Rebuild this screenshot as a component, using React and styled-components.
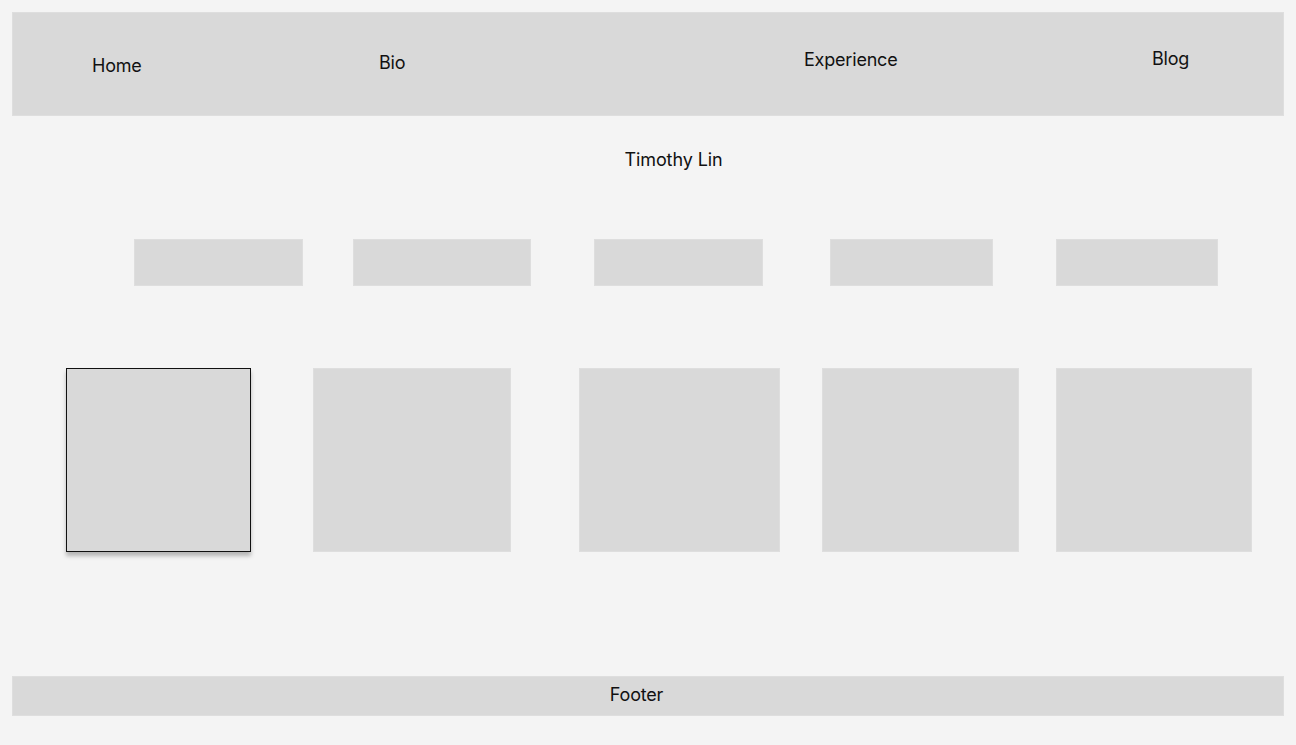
import styled, { createGlobalStyle } from "styled-components"

const GlobalStyle = createGlobalStyle`
  body {
    margin: 0;
    background: #f4f4f4;
    font-family: Inter, "Noto Sans", sans-serif;
    color: #111;
  }
`

const Page = styled.div`
  padding: 12px;
  min-height: 745px;
  box-sizing: border-box;
`

const Nav = styled.nav`
  display: flex;
  align-items: flex-start;
  height: 104px;
  background: #d9d9d9;
  border: 1px solid #dedede;
  box-sizing: border-box;
  padding-left: 79px;
`

const NavLink = styled.a`
  display: block;
  width: ${(p) => p.$w}px;
  margin-top: ${(p) => p.$top}px;
  font-size: 18px;
  line-height: 22px;
  letter-spacing: -0.2px;
  color: #111;
  text-decoration: none;
`

const Title = styled.h1`
  margin: 33px 0 0;
  padding-left: 51px;
  text-align: center;
  font-size: 18px;
  line-height: 22px;
  letter-spacing: -0.1px;
  font-weight: 400;
`

const Row = styled.div`
  display: flex;
  align-items: flex-start;
  margin-top: ${(p) => p.$top}px;
`

const Box = styled.div`
  flex: none;
  box-sizing: border-box;
  width: ${(p) => p.$w}px;
  height: ${(p) => p.$h}px;
  margin-left: ${(p) => p.$ml}px;
  background: #d9d9d9;
  border: 1px solid ${(p) => (p.$active ? "#111" : "#dedede")};
  box-shadow: ${(p) => (p.$active ? "0 4px 4px rgba(0, 0, 0, 0.25)" : "none")};
`

const Footer = styled.footer`
  margin-top: 124px;
  height: 40px;
  box-sizing: border-box;
  background: #d9d9d9;
  border: 1px solid #dedede;
  display: flex;
  align-items: center;
  justify-content: center;
  padding: 0 23px 4px 0;
  font-size: 18px;
  letter-spacing: -0.2px;
`

const links = [
  { label: "Home", w: 287, top: 42 },
  { label: "Bio", w: 425, top: 39 },
  { label: "Experience", w: 348, top: 36 },
  { label: "Blog", w: 80, top: 35 },
]

const tabs = [
  { ml: 122, w: 169 },
  { ml: 50, w: 178 },
  { ml: 63, w: 169 },
  { ml: 67, w: 163 },
  { ml: 63, w: 162 },
]

const cards = [
  { ml: 54, w: 185, active: true },
  { ml: 62, w: 198 },
  { ml: 68, w: 201 },
  { ml: 42, w: 197 },
  { ml: 37, w: 196 },
]

function App() {
  return (
    <Page>
      <GlobalStyle />
      <Nav>
        {links.map((l) => (
          <NavLink key={l.label} href="#" $w={l.w} $top={l.top}>
            {l.label}
          </NavLink>
        ))}
      </Nav>
      <Title>Timothy Lin</Title>
      <Row $top={68}>
        {tabs.map((t, i) => (
          <Box key={i} $ml={t.ml} $w={t.w} $h={47} />
        ))}
      </Row>
      <Row $top={82}>
        {cards.map((c, i) => (
          <Box key={i} $ml={c.ml} $w={c.w} $h={184} $active={c.active} />
        ))}
      </Row>
      <Footer>Footer</Footer>
    </Page>
  )
}

export default App
